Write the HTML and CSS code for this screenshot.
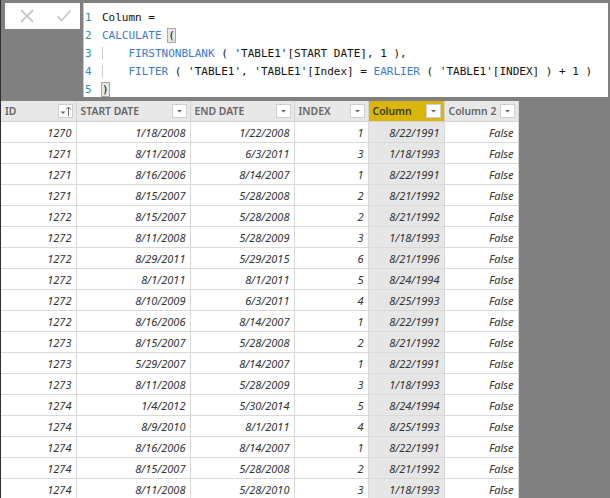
FILE: index.html
```html
<!DOCTYPE html>
<html>
<head>
<meta charset="utf-8">
<link rel="stylesheet" href="styles.css">
</head>
<body>
<div class="app">
  <div class="top">
    <div class="actions">
      <svg class="ico" width="16" height="16" viewBox="0 0 16 16"><path d="M2 2 L14 14 M14 2 L2 14" stroke="#c8c8c8" stroke-width="1.8" fill="none"/></svg>
      <svg class="ico" width="16" height="16" viewBox="0 0 16 16"><path d="M1.5 8.5 L5.5 12.5 L14.5 2.5" stroke="#c8c8c8" stroke-width="1.8" fill="none"/></svg>
    </div>
    <div class="formula">
      <div class="line"><span class="ln">1</span><span class="code">Column =</span></div>
      <div class="line"><span class="ln">2</span><span class="code"><span class="fn">CALCULATE</span> <span class="brk">(</span></span></div>
      <div class="line"><span class="ln">3</span><span class="code"><span class="guide">    </span><span class="fn">FIRSTNONBLANK</span> ( 'TABLE1'[START DATE], 1 ),</span></div>
      <div class="line"><span class="ln">4</span><span class="code"><span class="guide">    </span><span class="fn">FILTER</span> ( 'TABLE1', 'TABLE1'[Index] = <span class="fn">EARLIER</span> ( 'TABLE1'[INDEX] ) + 1 )</span></div>
      <div class="line"><span class="ln">5</span><span class="code"><span class="brk">)</span></span></div>
    </div>
  </div>
  <table class="grid">
    <colgroup>
      <col class="c1"><col class="c2"><col class="c3"><col class="c4"><col class="c5"><col class="c6">
    </colgroup>
    <thead>
      <tr>
        <th><div class="hd"><span>ID</span><span class="fb"><svg width="13" height="12" viewBox="0 0 13 12"><path d="M1.5 6.5 L6.5 6.5 L4 9 Z" fill="#666"/><path d="M9.5 11 L9.5 2 M7 4.5 L9.5 2 L12 4.5" stroke="#666" stroke-width="1" fill="none"/></svg></span></div></th>
        <th><div class="hd"><span>START DATE</span><span class="fb"><svg width="13" height="12" viewBox="0 0 13 12"><path d="M4 5 L9 5 L6.5 7.5 Z" fill="#666"/></svg></span></div></th>
        <th><div class="hd"><span>END DATE</span><span class="fb"><svg width="13" height="12" viewBox="0 0 13 12"><path d="M4 5 L9 5 L6.5 7.5 Z" fill="#666"/></svg></span></div></th>
        <th><div class="hd"><span>INDEX</span><span class="fb"><svg width="13" height="12" viewBox="0 0 13 12"><path d="M4 5 L9 5 L6.5 7.5 Z" fill="#666"/></svg></span></div></th>
        <th class="sel"><div class="hd"><span>Column</span><span class="fb"><svg width="13" height="12" viewBox="0 0 13 12"><path d="M4 5 L9 5 L6.5 7.5 Z" fill="#666"/></svg></span></div></th>
        <th><div class="hd"><span>Column 2</span><span class="fb"><svg width="13" height="12" viewBox="0 0 13 12"><path d="M4 5 L9 5 L6.5 7.5 Z" fill="#666"/></svg></span></div></th>
      </tr>
    </thead>
    <tbody>
      <tr><td>1270</td><td>1/18/2008</td><td>1/22/2008</td><td>1</td><td class="sel">8/22/1991</td><td>False</td></tr>
      <tr><td>1271</td><td>8/11/2008</td><td>6/3/2011</td><td>3</td><td class="sel">1/18/1993</td><td>False</td></tr>
      <tr><td>1271</td><td>8/16/2006</td><td>8/14/2007</td><td>1</td><td class="sel">8/22/1991</td><td>False</td></tr>
      <tr><td>1271</td><td>8/15/2007</td><td>5/28/2008</td><td>2</td><td class="sel">8/21/1992</td><td>False</td></tr>
      <tr><td>1272</td><td>8/15/2007</td><td>5/28/2008</td><td>2</td><td class="sel">8/21/1992</td><td>False</td></tr>
      <tr><td>1272</td><td>8/11/2008</td><td>5/28/2009</td><td>3</td><td class="sel">1/18/1993</td><td>False</td></tr>
      <tr><td>1272</td><td>8/29/2011</td><td>5/29/2015</td><td>6</td><td class="sel">8/21/1996</td><td>False</td></tr>
      <tr><td>1272</td><td>8/1/2011</td><td>8/1/2011</td><td>5</td><td class="sel">8/24/1994</td><td>False</td></tr>
      <tr><td>1272</td><td>8/10/2009</td><td>6/3/2011</td><td>4</td><td class="sel">8/25/1993</td><td>False</td></tr>
      <tr><td>1272</td><td>8/16/2006</td><td>8/14/2007</td><td>1</td><td class="sel">8/22/1991</td><td>False</td></tr>
      <tr><td>1273</td><td>8/15/2007</td><td>5/28/2008</td><td>2</td><td class="sel">8/21/1992</td><td>False</td></tr>
      <tr><td>1273</td><td>5/29/2007</td><td>8/14/2007</td><td>1</td><td class="sel">8/22/1991</td><td>False</td></tr>
      <tr><td>1273</td><td>8/11/2008</td><td>5/28/2009</td><td>3</td><td class="sel">1/18/1993</td><td>False</td></tr>
      <tr><td>1274</td><td>1/4/2012</td><td>5/30/2014</td><td>5</td><td class="sel">8/24/1994</td><td>False</td></tr>
      <tr><td>1274</td><td>8/9/2010</td><td>8/1/2011</td><td>4</td><td class="sel">8/25/1993</td><td>False</td></tr>
      <tr><td>1274</td><td>8/16/2006</td><td>8/14/2007</td><td>1</td><td class="sel">8/22/1991</td><td>False</td></tr>
      <tr><td>1274</td><td>8/15/2007</td><td>5/28/2008</td><td>2</td><td class="sel">8/21/1992</td><td>False</td></tr>
      <tr><td>1274</td><td>8/11/2008</td><td>5/28/2010</td><td>3</td><td class="sel">1/18/1993</td><td>False</td></tr>
    </tbody>
  </table>
</div>
</body>
</html>
```

FILE: styles.css
```css
html, body {
  margin: 0;
  padding: 0;
  height: 100%;
  overflow: hidden;
}
body {
  background: #808080;
}
.app {
  height: 498px;
  border-left: 1px solid #2e2e2e;
  box-sizing: border-box;
  overflow: hidden;
}
.top {
  display: flex;
  align-items: flex-start;
  gap: 3px;
  padding: 3px 2px 0 4px;
  height: 98px;
  box-sizing: border-box;
}
.actions {
  width: 75px;
  height: 26px;
  background: #fff;
  display: flex;
  align-items: center;
  gap: 21px;
  padding-left: 14px;
  box-sizing: border-box;
}
.formula {
  flex: 1;
  height: 94px;
  background: #fff;
  border-left: 1px solid #c8c8c8;
  padding-top: 6px;
  box-sizing: border-box;
  font-family: "DejaVu Sans Mono", monospace;
  font-size: 11px;
  color: #111;
}
.line {
  display: flex;
  height: 18px;
  line-height: 18px;
  align-items: center;
}
.ln {
  width: 17px;
  padding-left: 1px;
  color: #2b91af;
}
.code {
  white-space: pre;
}
.fn {
  color: #3c7bd0;
}
.brk {
  background: #e6e6e6;
  outline: 1px solid #a8a8a8;
  outline-offset: 0;
}
.guide {
  box-shadow: inset 1px 0 0 #d0d0d0;
}
.grid {
  border-collapse: collapse;
  table-layout: fixed;
  width: 517px;
  margin-top: 3px;
  background: #fff;
  font-family: "Noto Sans", "Open Sans", sans-serif;
  font-size: 11px;
}
.c1 { width: 75px; }
.c2 { width: 114px; }
.c3 { width: 104px; }
.c4 { width: 74px; }
.c5 { width: 76px; }
.c6 { width: 74px; }
th {
  background: #e8e8e8;
  color: #666;
  font-weight: 600;
  font-size: 10.4px;
  text-align: left;
  height: 20px;
  padding: 0 3px 0 4px;
  border-right: 1px solid #d4d4d4;
  border-bottom: 1px solid #d4d4d4;
}
th.sel {
  background: #dab608;
  color: #3a3a1a;
}
.hd {
  display: flex;
  align-items: center;
  justify-content: space-between;
}
.fb {
  width: 15px;
  height: 14px;
  flex: none;
  box-sizing: border-box;
  background: #fff;
  border: 1px solid #cfcfcf;
  display: flex;
  align-items: center;
  justify-content: center;
}
td {
  height: 20px;
  padding: 0 4px 0 4px;
  text-align: right;
  font-style: italic;
  color: #333;
  border-right: 1px solid #d9d9d9;
  border-bottom: 1px solid #d9d9d9;
}
td.sel {
  background: #e6e6e6;
}
```
